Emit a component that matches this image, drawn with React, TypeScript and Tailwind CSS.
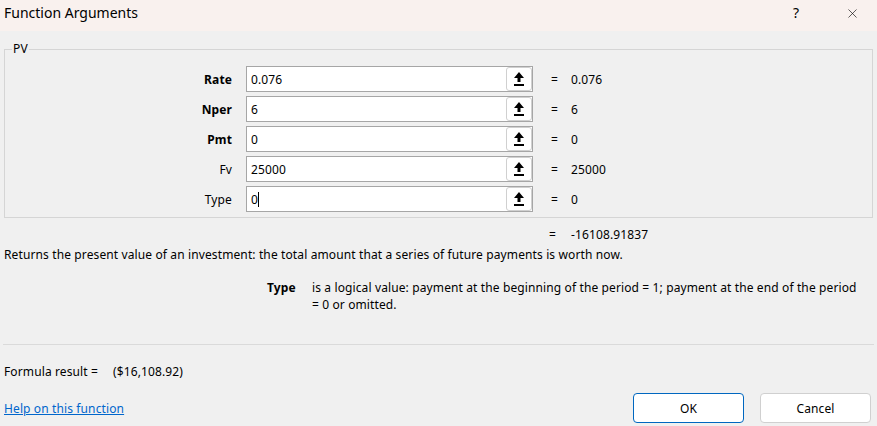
import { X } from "lucide-react";

const rows = [
  { label: "Rate", value: "0.076", result: "0.076", bold: true },
  { label: "Nper", value: "6", result: "6", bold: true },
  { label: "Pmt", value: "0", result: "0", bold: true },
  { label: "Fv", value: "25000", result: "25000", bold: false },
  { label: "Type", value: "0", result: "0", bold: false, focused: true },
];

const RefIcon = () => (
  <svg width="10" height="14" viewBox="0 0 10 14" fill="#000">
    <path d="M5 0 L10 6 L6.5 6 L6.5 10 L3.5 10 L3.5 6 L0 6 Z" />
    <rect x="0" y="12" width="10" height="2" />
  </svg>
);

export default function App() {
  return (
    <div className="w-[877px] h-[426px] bg-[#f0f0f0] text-black text-[12px] leading-[17px] tracking-[0.12px] font-['Noto_Sans',sans-serif] flex flex-col overflow-hidden">
      <div className="h-[31px] bg-[#f9f1ee] flex items-start pt-[4px] pl-[4px] tracking-normal">
        <span className="text-[14px] leading-[18px] flex-1">Function Arguments</span>
        <span className="text-[14px] leading-[18px] w-[10px] mr-[42px]">?</span>
        <X className="w-[15px] h-[15px] mr-[17px] mt-[2px]" strokeWidth={1} />
      </div>

      <fieldset className="mx-[4px] mt-[10px] border border-[#d5d5d5] pt-[9px] pb-[5px] flex flex-col gap-[4px]">
        <legend className="ml-[7px] px-[1px] leading-[16px]">PV</legend>
        {rows.map((r) => (
          <div key={r.label} className="flex items-center h-[26px]">
            <span className={`w-[227px] text-right ${r.bold ? "font-bold" : ""}`}>{r.label}</span>
            <div className="ml-[14px] w-[287px] h-[26px] bg-white border border-[#a6a6a6] flex items-center">
              <span className="flex-1 pl-[4px]">
                {r.value}
                {r.focused && <span className="inline-block w-[1px] h-[15px] bg-black align-middle -mt-[2px]" />}
              </span>
              <div className="w-[26px] h-[24px] rounded-[3px] border border-[#d0d0d0] bg-white flex items-center justify-center">
                <RefIcon />
              </div>
            </div>
            <span className="ml-[18px] w-[20px]">=</span>
            <span>{r.result}</span>
          </div>
        ))}
      </fieldset>

      <div className="mt-[8px] flex">
        <span className="ml-[549px] w-[22px]">=</span>
        <span>-16108.91837</span>
      </div>

      <p className="mt-[3px] pl-[4px]">
        Returns the present value of an investment: the total amount that a series of future payments is worth now.
      </p>

      <div className="mt-[16px] flex">
        <span className="ml-[267px] w-[45px] font-bold">Type</span>
        <p className="w-[550px]">
          is a logical value: payment at the beginning of the period = 1; payment at the end of the period = 0 or omitted.
        </p>
      </div>

      <div className="mt-[31px] mx-[3px] h-[1px] bg-[#dadada]" />

      <div className="mt-[18px] pl-[4px] flex">
        <span className="w-[109px]">Formula result =</span>
        <span>($16,108.92)</span>
      </div>

      <div className="mt-[13px] flex items-center pl-[4px] pr-[6px]">
        <a className="flex-1 text-[#0066cc] underline">Help on this function</a>
        <button className="w-[111px] h-[30px] rounded-[4px] bg-white border border-[#0067c0]">OK</button>
        <button className="ml-[16px] w-[111px] h-[30px] rounded-[4px] bg-white border border-[#d0d0d0]">Cancel</button>
      </div>
    </div>
  );
}
